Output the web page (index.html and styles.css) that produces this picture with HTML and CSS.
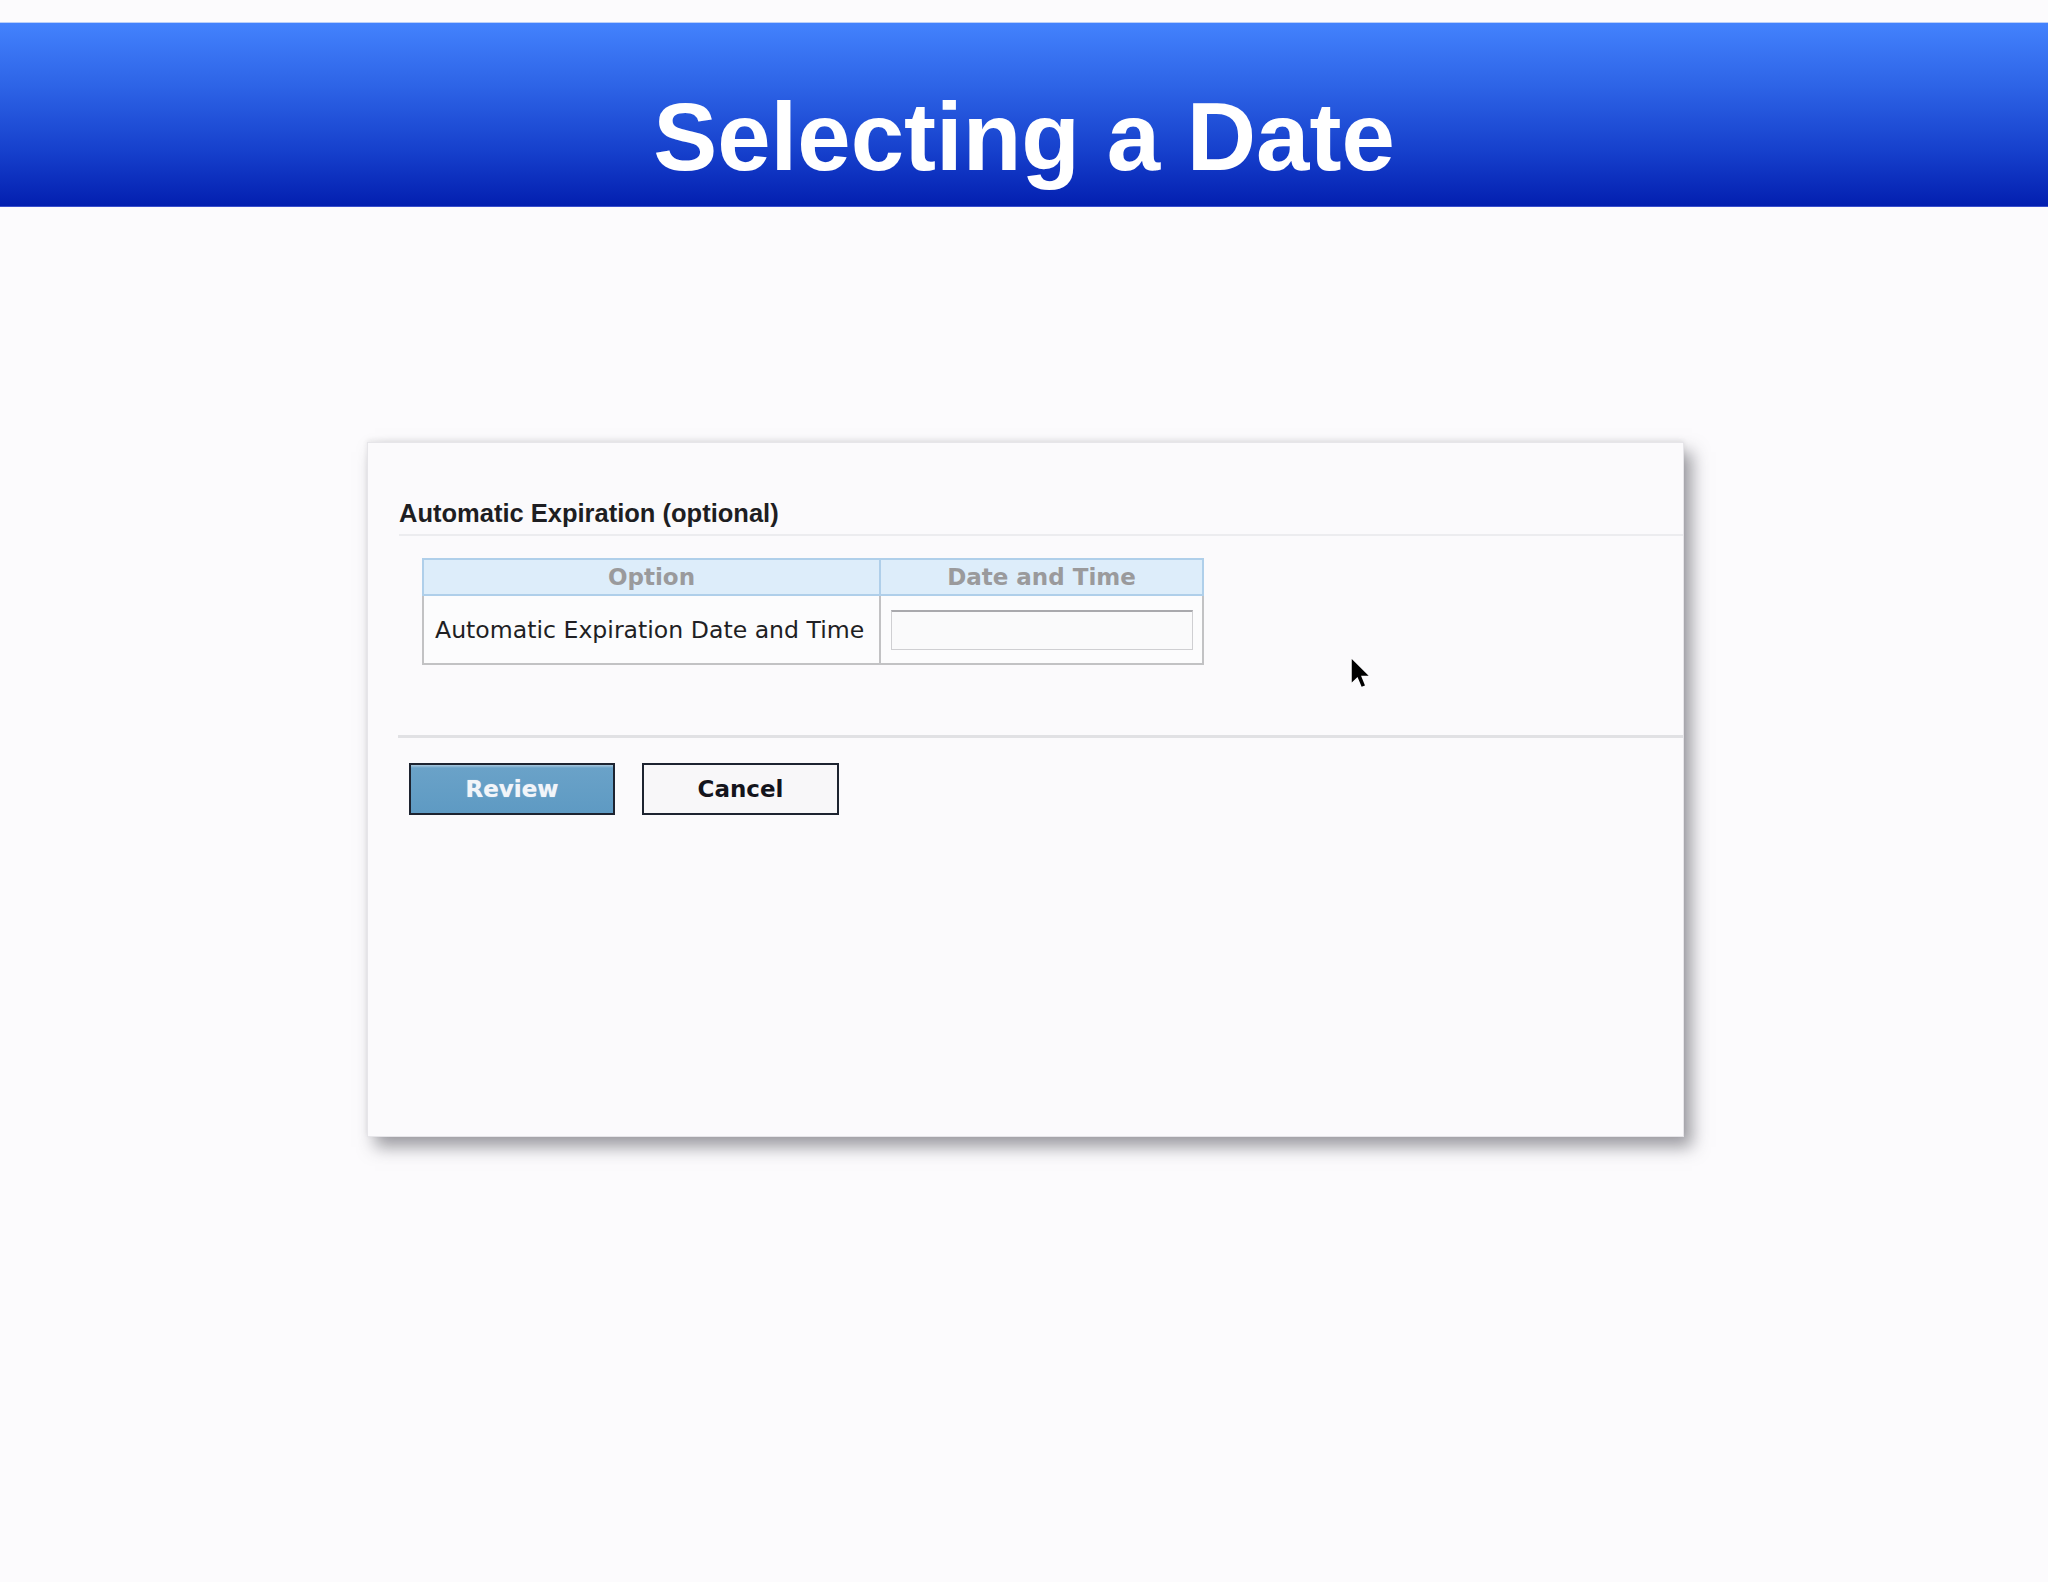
FILE: index.html
```html
<!DOCTYPE html>
<html lang="en">
<head>
<meta charset="utf-8">
<title>Selecting a Date</title>
<link rel="stylesheet" href="styles.css">
</head>
<body>
<header class="banner">
  <h1 class="banner-title">Selecting a Date</h1>
</header>
<main class="stage">
  <div class="panel">
    <section class="section">
      <h2 class="section-title">Automatic Expiration (optional)</h2>
      <table class="opts">
        <thead>
          <tr>
            <th class="col-option">Option</th>
            <th class="col-date">Date and Time</th>
          </tr>
        </thead>
        <tbody>
          <tr>
            <td class="cell-label">Automatic Expiration Date and Time</td>
            <td class="cell-input"><input class="date-input" type="text" aria-label="Automatic Expiration Date and Time"></td>
          </tr>
        </tbody>
      </table>
    </section>
    <div class="actions">
      <button class="btn btn-primary" type="button">Review</button>
      <button class="btn btn-secondary" type="button">Cancel</button>
    </div>
    <svg class="cursor" width="19" height="30" viewBox="0 0 12.5 19.5" aria-hidden="true">
      <path d="M0.5 0.5 L0.5 16 L4.3 12.4 L7 18.8 L9.2 17.9 L6.6 11.6 L11.6 11.6 Z" fill="#000"/>
    </svg>
  </div>
</main>
</body>
</html>
```

FILE: styles.css
```css
html, body {
  margin: 0;
  padding: 0;
}
body {
  background: #fcfbfd;
  width: 2048px;
  height: 1582px;
  overflow: hidden;
  font-family: "DejaVu Sans", Verdana, sans-serif;
}

.banner {
  margin-top: 22px;
  height: 185px;
  box-sizing: border-box;
  padding-top: 66px;
  border-top: 1px solid #b9cff9;
  border-bottom: 1px solid #3a4fcc;
  background: linear-gradient(to bottom, #4382fd 0%, #2d63e6 35%, #1640cc 70%, #031fb0 100%);
  text-align: center;
}
.banner-title {
  margin: 0;
  font-family: "Liberation Sans", Arial, sans-serif;
  font-weight: bold;
  font-size: 96px;
  line-height: 1;
  color: #ffffff;
}

.stage {
  padding-top: 235px;
  padding-left: 367px;
}

.panel {
  position: relative;
  width: 1317px;
  height: 695px;
  box-sizing: border-box;
  padding-top: 55px;
  background: #fbfafc;
  border: 1px solid #e6e5e9;
  box-shadow: 8px 10px 16px rgba(60, 60, 70, 0.5), 0 -2px 5px rgba(0, 0, 0, 0.07);
}

.section {
  padding-left: 31px;
}
.section-title {
  margin: 0;
  padding-bottom: 6px;
  border-bottom: 2px solid #ececef;
  font-family: "Liberation Sans", Arial, sans-serif;
  font-weight: bold;
  font-size: 25.5px;
  line-height: 30px;
  color: #1e1e22;
}

.opts {
  margin: 22px 0 0 23px;
  border-collapse: collapse;
  width: 782px;
}
.opts th {
  height: 34px;
  padding: 0;
  background: #ddedfa;
  border: 2px solid #afcfea;
  color: #9a9a9c;
  font-family: "DejaVu Sans", Verdana, sans-serif;
  font-weight: bold;
  font-size: 23px;
  text-align: center;
  vertical-align: middle;
}
.col-option {
  width: 455px;
}
.opts td {
  height: 67px;
  padding: 0;
  border: 2px solid #c2c2c4;
  border-top-color: #afcfea;
  background: #fcfcfd;
  vertical-align: middle;
}
.cell-label {
  padding-left: 11px !important;
  font-size: 23.6px;
  color: #1f1f24;
  white-space: nowrap;
}
.cell-input {
  padding-left: 10px !important;
}
.date-input {
  display: block;
  width: 302px;
  height: 40px;
  box-sizing: border-box;
  margin: 0;
  border: 1.5px solid #cfcfd2;
  border-top: 2px solid #a9a9ad;
  background: #fafafb;
  font-family: "DejaVu Sans", Verdana, sans-serif;
  font-size: 20px;
}

.actions {
  margin-top: 70px;
  margin-left: 30px;
  padding-top: 25px;
  padding-left: 11px;
  border-top: 3px solid #e1e1e4;
  display: flex;
  gap: 27px;
}
.btn {
  height: 52px;
  box-sizing: border-box;
  margin: 0;
  padding: 0;
  border: 2px solid #1d2330;
  font-family: "DejaVu Sans", Verdana, sans-serif;
  font-weight: bold;
  font-size: 23px;
  cursor: pointer;
}
.btn-primary {
  width: 206px;
  background: linear-gradient(to bottom, #a9c7dc 0px, #6aa2c8 3px, #5e9ac3 100%);
  color: #f2f5f9;
  text-shadow: 0 0 1px rgba(255, 255, 255, 0.6);
}
.btn-secondary {
  width: 197px;
  background: #f8f7f9;
  color: #14141c;
}

.cursor {
  position: absolute;
  left: 983px;
  top: 215px;
  filter: blur(0.6px);
}
```
